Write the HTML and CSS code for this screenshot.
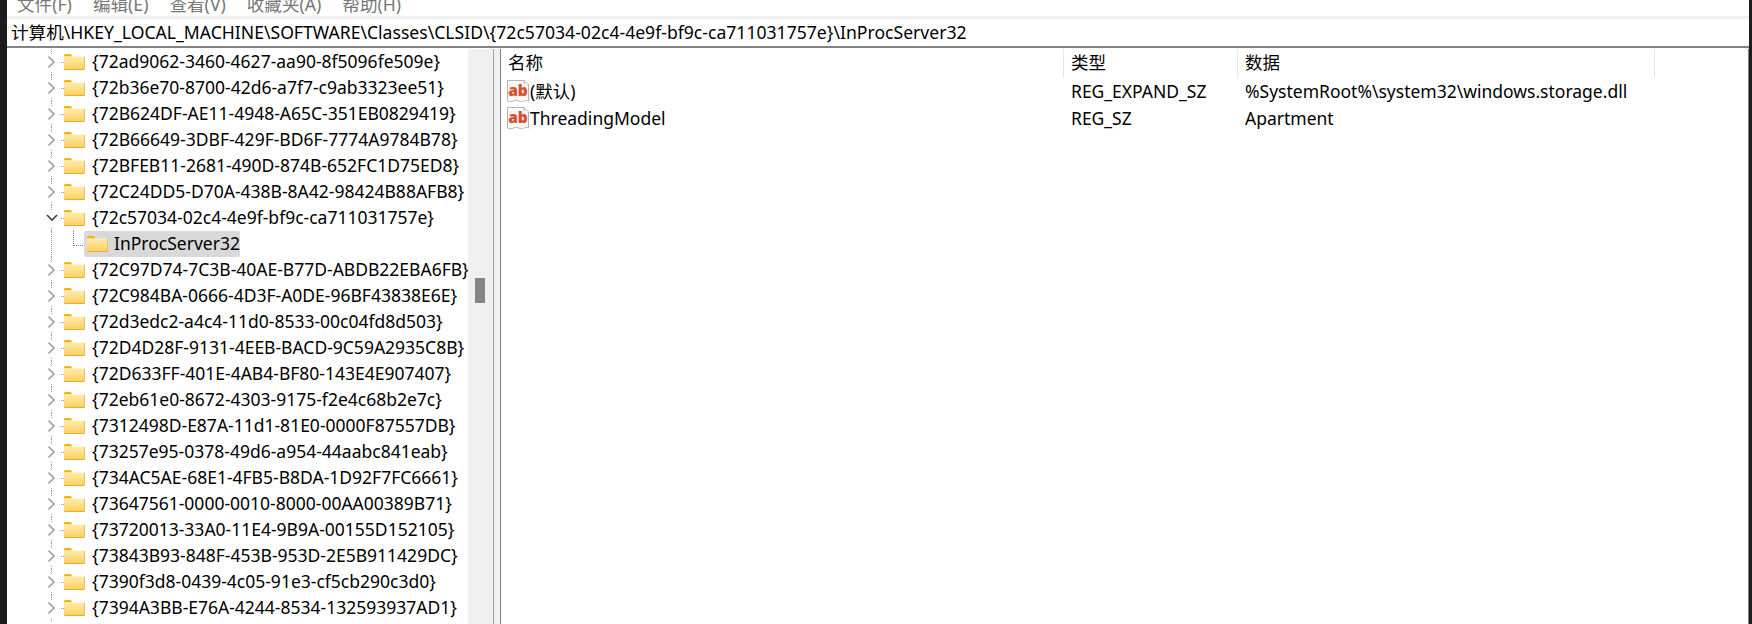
FILE: index.html
```html
<!DOCTYPE html>
<html lang="zh-CN">
<head>
<meta charset="utf-8">
<title>注册表编辑器</title>
<link rel="stylesheet" href="styles.css">
</head>
<body>
<svg class="defs" width="0" height="0" aria-hidden="true">
  <defs>
    <linearGradient id="fg" x1="0" y1="0" x2="0" y2="1">
      <stop offset="0" stop-color="#ffecb0"/>
      <stop offset="1" stop-color="#fdcf5e"/>
    </linearGradient>
    <symbol id="folder" viewBox="0 0 21 16">
      <path d="M0 1.500C0 .7.500 0 1.300 0h5.200l2 2.500H0z" fill="#f5b400"/>
      <path d="M0 2.500h21V15.500H0z" fill="url(#fg)"/>
      <path d="M.5 15.500h20" stroke="#e3ac34" fill="none"/>
      <path d="M20.500 3v12" stroke="#ecbf5a" fill="none"/>
    </symbol>
    <symbol id="chev-r" viewBox="0 0 10 14"><path d="M.5 1.500l5.500 5.500-5.500 5.500" fill="none" stroke="#a0a0a0" stroke-width="1.600"/></symbol>
    <symbol id="chev-d" viewBox="0 0 14 10"><path d="M2 2l5 5 5-5" fill="none" stroke="#404040" stroke-width="1.600"/></symbol>
    <symbol id="regsz" viewBox="0 0 24 24">
      <path d="M1.500 .5H18l4.500 4V21c-3-2-5 1.500-8 .5s-5-1.500-7-.5-4 1-6 0z" fill="#fafafa" stroke="#b4b4b4"/>
      <path d="M18 .5v4h4.500" fill="#e6e6e6" stroke="#b4b4b4"/>
      <rect x="2" y="4" width="20" height="13" fill="#f4f4f4"/>
      <text x="12" y="16" class="ab">ab</text>
    </symbol>
  </defs>
</svg>

<div class="window">
  <nav class="menu">
    <span>文件(F)</span><span>编辑(E)</span><span>查看(V)</span><span>收藏夹(A)</span><span>帮助(H)</span>
  </nav>
  <div class="address">计算机\HKEY_LOCAL_MACHINE\SOFTWARE\Classes\CLSID\{72c57034-02c4-4e9f-bf9c-ca711031757e}\InProcServer32</div>

  <div class="panes">
    <section class="tree">
      <div class="tree-list">
        <div class="row"><svg class="chev"><use href="#chev-r"/></svg><span class="tick"></span><svg class="folder"><use href="#folder"/></svg><span class="label">{72ad9062-3460-4627-aa90-8f5096fe509e}</span></div>
        <div class="row"><svg class="chev"><use href="#chev-r"/></svg><span class="tick"></span><svg class="folder"><use href="#folder"/></svg><span class="label">{72b36e70-8700-42d6-a7f7-c9ab3323ee51}</span></div>
        <div class="row"><svg class="chev"><use href="#chev-r"/></svg><span class="tick"></span><svg class="folder"><use href="#folder"/></svg><span class="label">{72B624DF-AE11-4948-A65C-351EB0829419}</span></div>
        <div class="row"><svg class="chev"><use href="#chev-r"/></svg><span class="tick"></span><svg class="folder"><use href="#folder"/></svg><span class="label">{72B66649-3DBF-429F-BD6F-7774A9784B78}</span></div>
        <div class="row"><svg class="chev"><use href="#chev-r"/></svg><span class="tick"></span><svg class="folder"><use href="#folder"/></svg><span class="label">{72BFEB11-2681-490D-874B-652FC1D75ED8}</span></div>
        <div class="row"><svg class="chev"><use href="#chev-r"/></svg><span class="tick"></span><svg class="folder"><use href="#folder"/></svg><span class="label">{72C24DD5-D70A-438B-8A42-98424B88AFB8}</span></div>
        <div class="row open"><svg class="chev"><use href="#chev-d"/></svg><span class="tick"></span><svg class="folder"><use href="#folder"/></svg><span class="label">{72c57034-02c4-4e9f-bf9c-ca711031757e}</span></div>
        <div class="row child"><span class="elbow"></span><div class="selected"><svg class="folder"><use href="#folder"/></svg><span class="label">InProcServer32</span></div></div>
        <div class="row"><svg class="chev"><use href="#chev-r"/></svg><span class="tick"></span><svg class="folder"><use href="#folder"/></svg><span class="label">{72C97D74-7C3B-40AE-B77D-ABDB22EBA6FB}</span></div>
        <div class="row"><svg class="chev"><use href="#chev-r"/></svg><span class="tick"></span><svg class="folder"><use href="#folder"/></svg><span class="label">{72C984BA-0666-4D3F-A0DE-96BF43838E6E}</span></div>
        <div class="row"><svg class="chev"><use href="#chev-r"/></svg><span class="tick"></span><svg class="folder"><use href="#folder"/></svg><span class="label">{72d3edc2-a4c4-11d0-8533-00c04fd8d503}</span></div>
        <div class="row"><svg class="chev"><use href="#chev-r"/></svg><span class="tick"></span><svg class="folder"><use href="#folder"/></svg><span class="label">{72D4D28F-9131-4EEB-BACD-9C59A2935C8B}</span></div>
        <div class="row"><svg class="chev"><use href="#chev-r"/></svg><span class="tick"></span><svg class="folder"><use href="#folder"/></svg><span class="label">{72D633FF-401E-4AB4-BF80-143E4E907407}</span></div>
        <div class="row"><svg class="chev"><use href="#chev-r"/></svg><span class="tick"></span><svg class="folder"><use href="#folder"/></svg><span class="label">{72eb61e0-8672-4303-9175-f2e4c68b2e7c}</span></div>
        <div class="row"><svg class="chev"><use href="#chev-r"/></svg><span class="tick"></span><svg class="folder"><use href="#folder"/></svg><span class="label">{7312498D-E87A-11d1-81E0-0000F87557DB}</span></div>
        <div class="row"><svg class="chev"><use href="#chev-r"/></svg><span class="tick"></span><svg class="folder"><use href="#folder"/></svg><span class="label">{73257e95-0378-49d6-a954-44aabc841eab}</span></div>
        <div class="row"><svg class="chev"><use href="#chev-r"/></svg><span class="tick"></span><svg class="folder"><use href="#folder"/></svg><span class="label">{734AC5AE-68E1-4FB5-B8DA-1D92F7FC6661}</span></div>
        <div class="row"><svg class="chev"><use href="#chev-r"/></svg><span class="tick"></span><svg class="folder"><use href="#folder"/></svg><span class="label">{73647561-0000-0010-8000-00AA00389B71}</span></div>
        <div class="row"><svg class="chev"><use href="#chev-r"/></svg><span class="tick"></span><svg class="folder"><use href="#folder"/></svg><span class="label">{73720013-33A0-11E4-9B9A-00155D152105}</span></div>
        <div class="row"><svg class="chev"><use href="#chev-r"/></svg><span class="tick"></span><svg class="folder"><use href="#folder"/></svg><span class="label">{73843B93-848F-453B-953D-2E5B911429DC}</span></div>
        <div class="row"><svg class="chev"><use href="#chev-r"/></svg><span class="tick"></span><svg class="folder"><use href="#folder"/></svg><span class="label">{7390f3d8-0439-4c05-91e3-cf5cb290c3d0}</span></div>
        <div class="row"><svg class="chev"><use href="#chev-r"/></svg><span class="tick"></span><svg class="folder"><use href="#folder"/></svg><span class="label">{7394A3BB-E76A-4244-8534-132593937AD1}</span></div>
      </div>
      <div class="scrollbar"><div class="thumb"></div></div>
    </section>
    <div class="splitter"></div>
    <section class="list">
      <div class="list-head">
        <div class="col-name">名称</div>
        <div class="col-type">类型</div>
        <div class="col-data">数据</div>
      </div>
      <div class="list-row">
        <div class="col-name"><svg class="regicon"><use href="#regsz"/></svg><span>(默认)</span></div>
        <div class="col-type">REG_EXPAND_SZ</div>
        <div class="col-data">%SystemRoot%\system32\windows.storage.dll</div>
      </div>
      <div class="list-row">
        <div class="col-name"><svg class="regicon"><use href="#regsz"/></svg><span>ThreadingModel</span></div>
        <div class="col-type">REG_SZ</div>
        <div class="col-data">Apartment</div>
      </div>
    </section>
  </div>
</div>
</body>
</html>
```
FILE: styles.css
```css
* { box-sizing: border-box; }
html, body { margin: 0; height: 100%; overflow: hidden; background: #1c1c1c; }
body { padding: 0 3px 0 7px; height: 624px; }
.defs { position: absolute; }
.ab { font: 800 15.5px "Open Sans", sans-serif; fill: #d9502c; text-anchor: middle; }

.window {
  height: 624px;
  background: #fff;
  color: #000;
  font-family: "Noto Sans", "Noto Sans CJK SC", sans-serif;
  font-size: 17.5px;
  display: flex;
  flex-direction: column;
}
.menu {
  height: 16px;
  padding-left: 10px;
  display: flex;
  gap: 21px;
  overflow: hidden;
  color: #777;
  font-size: 17.6px;
  line-height: 8px;
  white-space: nowrap;
}
.address {
  border-top: 3px solid #f0f0f0;
  border-bottom: 2px solid #838383;
  height: 32px;
  padding-left: 4px;
  font-size: 17.6px;
  line-height: 26px;
  white-space: nowrap;
  overflow: hidden;
}
.panes { flex: 1; display: flex; min-height: 0; padding-top: 1px; }

.tree { width: 486px; display: flex; flex: none; }
.tree-list { width: 461px; overflow: hidden; flex: none; }
.row {
  height: 26px;
  display: flex;
  align-items: center;
  padding-left: 41px;
  white-space: nowrap;
  position: relative;
}
.row::before {
  content: "";
  position: absolute;
  left: 44px;
  top: 0;
  height: 5px;
  border-left: 1px dotted #9a9a9a;
}
.row::after {
  content: "";
  position: absolute;
  left: 44px;
  bottom: 0;
  height: 3px;
  border-left: 1px dotted #9a9a9a;
}
.chev { width: 10px; height: 14px; flex: none; }
.open .chev { width: 14px; height: 10px; margin-left: -3px; margin-right: -1px; }
.tick { width: 3px; height: 1px; margin-left: 3px; border-top: 1px dotted #9a9a9a; flex: none; }
.folder { width: 21px; height: 16px; flex: none; }
.row .label { margin-left: 7px; margin-top: -3px; }
.child { padding-left: 67px; }
.child::before { height: 26px; }
.child::after { display: none; }
.elbow {
  position: absolute;
  left: 66px;
  top: 0;
  width: 10px;
  height: 15px;
  border-left: 1px dotted #808080;
  border-bottom: 1px dotted #808080;
}
.selected {
  margin-left: 10px;
  height: 26px;
  width: 156px;
  padding-left: 3px;
  display: flex;
  align-items: center;
  background: #d9d9d9;
  border-radius: 2px;
}
.selected .label { margin-left: 6px; }
.scrollbar { width: 25px; background: #f0f0f0; flex: none; position: relative; }
.thumb { position: absolute; left: 7px; top: 229px; width: 10px; height: 25px; background: #858585; }
.splitter { width: 8px; flex: none; background: #f0f0f0; border-left: 1px solid #a0a0a0; border-right: 1px solid #828282; }

.list { flex: 1; min-width: 0; border-right: 1px solid #828282; }
.list-head { display: flex; height: 29px; line-height: 27px; }
.list-head > div { border-right: 1px solid #e5e5e5; padding-left: 7px; }
.col-name { width: 563px; flex: none; }
.col-type { width: 174px; flex: none; padding-left: 7px; }
.col-data { width: 417px; flex: none; padding-left: 7px; }
.list-row { display: flex; height: 27px; align-items: center; white-space: nowrap; line-height: 24px; padding-bottom: 1px; }
.list-row .col-name { display: flex; align-items: center; padding-left: 5px; }
.regicon { width: 24px; height: 24px; flex: none; margin-top: 2px; }
```
